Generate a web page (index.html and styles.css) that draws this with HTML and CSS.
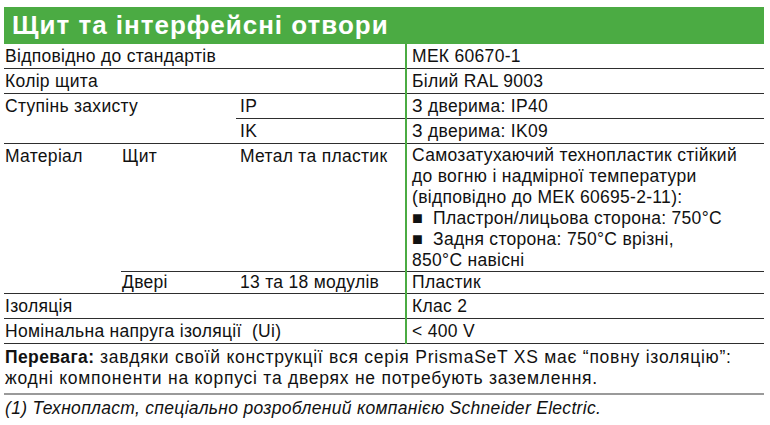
FILE: index.html
```html
<!DOCTYPE html>
<html lang="uk">
<head>
<meta charset="utf-8">
<link rel="stylesheet" href="styles.css">
</head>
<body>
<div class="sheet">
  <div class="title">Щит та інтерфейсні отвори</div>
  <table class="spec">
    <colgroup>
      <col class="c1"><col class="c2"><col class="c3"><col class="c4">
    </colgroup>
    <tr>
      <td colspan="3">Відповідно до стандартів</td>
      <td class="val">МЕК 60670-1</td>
    </tr>
    <tr>
      <td colspan="3">Колір щита</td>
      <td class="val">Білий RAL 9003</td>
    </tr>
    <tr>
      <td colspan="2" rowspan="2">Ступінь захисту</td>
      <td class="sub">IP</td>
      <td class="val">З дверима: IP40</td>
    </tr>
    <tr>
      <td class="sub">IK</td>
      <td class="val">З дверима: IK09</td>
    </tr>
    <tr class="tall">
      <td rowspan="2">Матеріал</td>
      <td class="mid">Щит</td>
      <td class="sub">Метал та пластик</td>
      <td class="val multi">Самозатухаючий технопластик стійкий<br>до вогню і надмірної температури<br>(відповідно до МЕК 60695-2-11):<br><span class="sq">■</span>Пластрон/лицьова сторона: 750°C<br><span class="sq">■</span>Задня сторона: 750°C врізні,<br>850°C навісні</td>
    </tr>
    <tr class="short">
      <td class="mid">Двері</td>
      <td class="sub">13 та 18 модулів</td>
      <td class="val">Пластик</td>
    </tr>
    <tr>
      <td colspan="3">Ізоляція</td>
      <td class="val">Клас 2</td>
    </tr>
    <tr>
      <td colspan="3">Номінальна напруга ізоляції&nbsp; (Ui)</td>
      <td class="val">&lt; 400 V</td>
    </tr>
  </table>
  <p class="note"><b>Перевага:</b> завдяки своїй конструкції вся серія PrismaSeT XS має “повну ізоляцію”:<br>жодні компоненти на корпусі та дверях не потребують заземлення.</p>
  <p class="foot">(1) Технопласт, спеціально розроблений компанією Schneider Electric.</p>
</div>
</body>
</html>
```
FILE: styles.css
```css
html, body {
  margin: 0;
  padding: 0;
  background: #ffffff;
}
body {
  font-family: "Liberation Sans", Arial, sans-serif;
  color: #111111;
}
.sheet {
  width: 760px;
  margin: 7px 0 0 4px;
}
.title {
  height: 37px;
  box-sizing: border-box;
  background: #4bab43;
  color: #ffffff;
  font-weight: bold;
  font-size: 26px;
  letter-spacing: 1px;
  line-height: 37px;
  padding-left: 8px;
  white-space: nowrap;
}
.spec {
  width: 760px;
  table-layout: fixed;
  border-collapse: collapse;
  font-size: 17.5px;
  letter-spacing: 0.3px;
}
.c1 { width: 117px; }
.c2 { width: 115px; }
.c3 { width: 170px; }
.c4 { width: 358px; }
.spec td {
  padding: 2px 0 1px 1px;
  line-height: 21px;
  border-bottom: 1px solid #2e2e2e;
  vertical-align: top;
  white-space: nowrap;
}
.spec td.mid { padding-left: 1px; }
.spec td.sub { padding-left: 4px; }
.spec td.val {
  border-left: 2px solid #4bab43;
  padding-left: 5px;
}
.spec td.multi {
  padding-top: 1px;
  padding-bottom: 0;
}
.spec tr.short td {
  padding-top: 0;
  padding-bottom: 0;
}
.sq {
  display: inline-block;
  width: 21px;
  font-size: 18px;
}
.note {
  margin: 0;
  padding: 3px 0 4px 1px;
  font-size: 17.5px;
  letter-spacing: 0.75px;
  line-height: 21px;
  border-bottom: 2px solid #9a9a9a;
  white-space: nowrap;
}
.note b { letter-spacing: 0.4px; }
.foot {
  margin: 0;
  padding: 3px 0 0 1px;
  font-size: 17.5px;
  letter-spacing: 0.3px;
  line-height: 21px;
  font-style: italic;
  white-space: nowrap;
}
```
